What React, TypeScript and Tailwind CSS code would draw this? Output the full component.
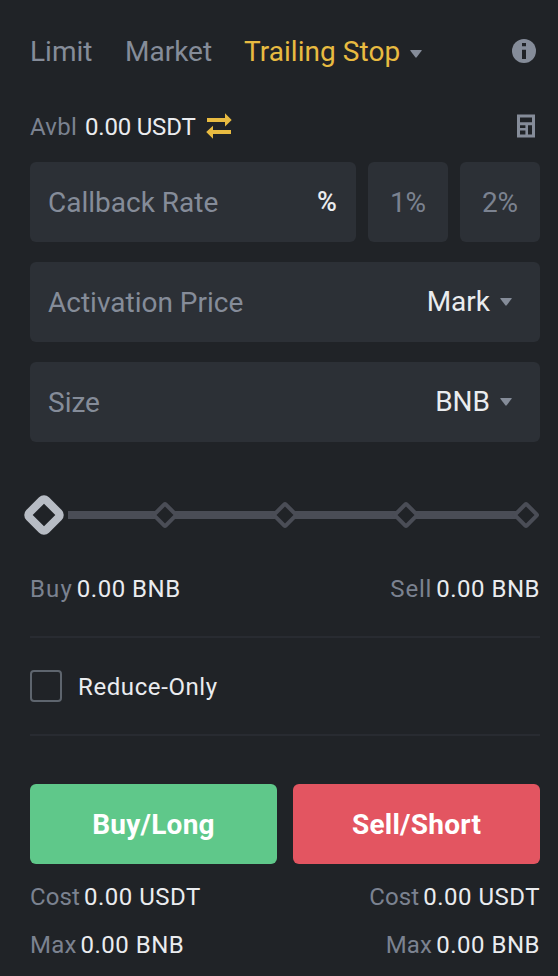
import React from "react";

function Caret() {
  return (
    <svg width="12" height="8" viewBox="0 0 12 8" className="shrink-0" fill="#858c99">
      <path d="M0.8 0h10.4q1 0 .4 .8L6.7 7.3q-.7 .8-1.4 0L.4 .8Q-.2 0 .8 0Z" />
    </svg>
  );
}

function Field({ label, children }: { label: string; children: React.ReactNode }) {
  return (
    <div className="flex h-20 grow items-center justify-between rounded-md bg-[#2c3036] pl-[18px] text-[28px] text-[#858c99]">
      <span className="pt-0.5">{label}</span>
      {children}
    </div>
  );
}

function Pair({ label, value, spacing }: { label: string; value: string; spacing: string }) {
  return (
    <div className="flex gap-1">
      <span className={`text-[#7b8290] ${spacing}`}>{label}</span>
      <span className="tracking-[0.5px] text-[#eaecef]">{value}</span>
    </div>
  );
}

const stops = ["left-[125px]", "left-[245px]", "left-[366px]", "left-[486px]"];

export default function App() {
  return (
    <div className="h-[976px] w-[558px] overflow-hidden bg-[#202327] pr-[18px] pl-[30px] font-['Roboto',sans-serif] text-[24px] leading-8 whitespace-nowrap">
      <div className="flex h-[102px] items-center text-[28px] text-[#858c99]">
        <span className="w-[95px] pt-0.5">Limit</span>
        <span className="w-[119px] pt-0.5">Market</span>
        <span className="w-[166px] pt-0.5 tracking-[0.05px] text-[#e8bb41]">Trailing Stop</span>
        <div className="flex pt-1.5"><Caret /></div>
        <svg className="ml-auto mr-1" width="24" height="24" viewBox="0 0 24 24">
          <circle cx="12" cy="12" r="12" fill="#858c99" />
          <path d="M10 4h4v3.3h-4zM10 10.8h4v9.2h-4z" fill="#202327" />
        </svg>
      </div>

      <div className="flex h-[50px] items-center">
        <span className="w-[55px] tracking-[0.3px] text-[#7b8290]">Avbl</span>
        <span className="w-[121px] tracking-[-0.2px] text-[#eaecef]">0.00 USDT</span>
        <svg className="mb-0.5" width="26" height="26" viewBox="0 0 26 26" fill="#e8bb41">
          <path d="M1 5h18V0.3l6.7 6.7L19 13.5V9H1zM25 17H7v-4.3L0.2 19 7 25.7V21h18z" />
        </svg>
        <svg className="mb-0.5 ml-auto mr-[5px]" width="18" height="24" viewBox="0 0 18 24" fill="#858c99" fillRule="evenodd">
          <path d="M0 0.5h18v23H0zM3 3.5h12v4.7H3zM3 11.2h5.4v2.7H3zM3 16.5h5.4v4H3zM11 11.2h4v9.3h-4z" />
        </svg>
      </div>

      <div className="mt-[10px] flex gap-3">
        <Field label="Callback Rate">
          <span className="pr-[19px] text-[27px] font-medium text-[#eaecef]">%</span>
        </Field>
        <div className="flex h-20 w-20 items-center justify-center rounded-md bg-[#2c3036] pt-0.5 text-[28px] text-[#7b8290]">1%</div>
        <div className="flex h-20 w-20 items-center justify-center rounded-md bg-[#2c3036] pt-0.5 text-[28px] text-[#7b8290]">2%</div>
      </div>
      <div className="mt-5 flex">
        <Field label="Activation Price">
          <span className="flex items-center gap-[10px] pr-7 text-[#eaecef]">Mark<Caret /></span>
        </Field>
      </div>
      <div className="mt-5 flex">
        <Field label="Size">
          <span className="flex items-center gap-[10px] pr-7 text-[#eaecef]">BNB<Caret /></span>
        </Field>
      </div>

      <div className="relative mt-[69px] ml-[38px] h-2 w-[458px] bg-[#4a4d56]">
        <div className="absolute -top-3 -left-10 h-8 w-8 rotate-45 rounded-[7px] border-8 border-[#b7bcc4] bg-[#202327]" />
        <div className="absolute -top-1.5 -left-[38px] h-5">
          {stops.map((s) => (
            <div key={s} className={`absolute ${s} h-5 w-5 rotate-45 rounded-[3px] border-4 border-[#4a4d56] bg-[#202327]`} />
          ))}
        </div>
      </div>

      <div className="mt-[54px] flex justify-between">
        <Pair label="Buy" value="0.00 BNB" spacing="tracking-[1.1px]" />
        <Pair label="Sell" value="0.00 BNB" spacing="tracking-[0.8px]" />
      </div>

      <div className="mt-[31px] flex h-[100px] items-center border-y-2 border-[#282b31] text-[#eaecef]">
        <div className="mr-4 h-8 w-8 rounded-[4px] border-2 border-[#5e656e]" />
        <span className="pt-0.5 tracking-[0.6px]">Reduce-Only</span>
      </div>

      <div className="mt-12 flex gap-4 text-[28px] font-bold tracking-[0.25px] text-white">
        <div className="flex h-20 flex-1 items-center justify-center rounded-md bg-[#5fc88a] pt-0.5">Buy/Long</div>
        <div className="flex h-20 flex-1 items-center justify-center rounded-md bg-[#e35561] pt-0.5">Sell/Short</div>
      </div>
      <div className="mt-[17px] flex justify-between">
        <Pair label="Cost" value="0.00 USDT" spacing="tracking-[0.1px]" />
        <Pair label="Cost" value="0.00 USDT" spacing="tracking-[0.1px]" />
      </div>
      <div className="mt-4 flex justify-between">
        <Pair label="Max" value="0.00 BNB" spacing="tracking-[0.2px]" />
        <Pair label="Max" value="0.00 BNB" spacing="tracking-[0.2px]" />
      </div>
    </div>
  );
}
